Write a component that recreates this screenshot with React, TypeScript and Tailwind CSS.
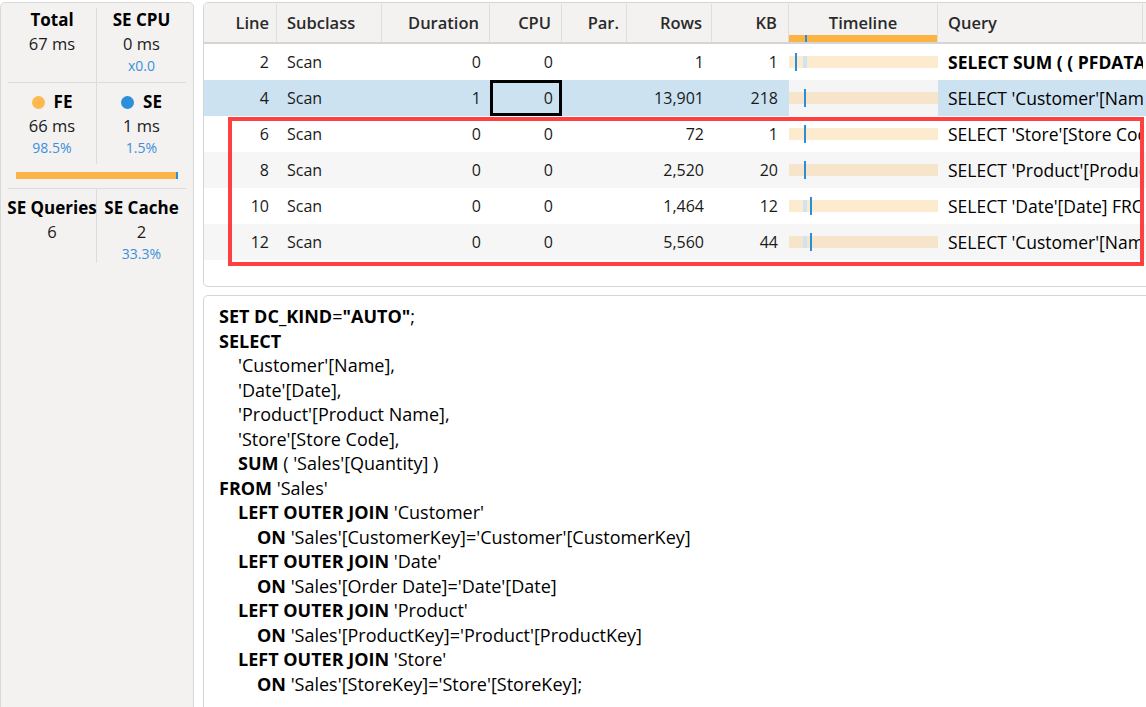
import React from "react";

type Row = {
  line: number;
  dur: string;
  cpu: string;
  rows: string;
  kb: string;
  query: string;
  bold?: boolean;
  selected?: boolean;
  tick: number;
  light?: number;
};

const rows: Row[] = [
  { line: 2, dur: "0", cpu: "0", rows: "1", kb: "1", query: "SELECT SUM ( ( PFDATA ( 'Sales'[Quantity] ) ) )", bold: true, tick: 6, light: 14 },
  { line: 4, dur: "1", cpu: "0", rows: "13,901", kb: "218", query: "SELECT 'Customer'[Name], 'Date'[Date]", selected: true, tick: 15 },
  { line: 6, dur: "0", cpu: "0", rows: "72", kb: "1", query: "SELECT 'Store'[Store Code] FROM 'Store';", tick: 15 },
  { line: 8, dur: "0", cpu: "0", rows: "2,520", kb: "20", query: "SELECT 'Product'[Product Name] FROM 'Product';", tick: 15 },
  { line: 10, dur: "0", cpu: "0", rows: "1,464", kb: "12", query: "SELECT 'Date'[Date] FROM 'Date';", tick: 21, light: 14 },
  { line: 12, dur: "0", cpu: "0", rows: "5,560", kb: "44", query: "SELECT 'Customer'[Name] FROM 'Customer';", tick: 21, light: 14 },
];

type Seg = [string, boolean?];
const code: { indent: number; segs: Seg[] }[] = [
  { indent: 0, segs: [["SET DC_KIND", true], ["="], ['"AUTO"', true], [";"]] },
  { indent: 0, segs: [["SELECT", true]] },
  { indent: 1, segs: [["'Customer'[Name],"]] },
  { indent: 1, segs: [["'Date'[Date],"]] },
  { indent: 1, segs: [["'Product'[Product Name],"]] },
  { indent: 1, segs: [["'Store'[Store Code],"]] },
  { indent: 1, segs: [["SUM", true], [" ( 'Sales'[Quantity] )"]] },
  { indent: 0, segs: [["FROM", true], [" 'Sales'"]] },
  { indent: 1, segs: [["LEFT OUTER JOIN", true], [" 'Customer'"]] },
  { indent: 2, segs: [["ON", true], [" 'Sales'[CustomerKey]='Customer'[CustomerKey]"]] },
  { indent: 1, segs: [["LEFT OUTER JOIN", true], [" 'Date'"]] },
  { indent: 2, segs: [["ON", true], [" 'Sales'[Order Date]='Date'[Date]"]] },
  { indent: 1, segs: [["LEFT OUTER JOIN", true], [" 'Product'"]] },
  { indent: 2, segs: [["ON", true], [" 'Sales'[ProductKey]='Product'[ProductKey]"]] },
  { indent: 1, segs: [["LEFT OUTER JOIN", true], [" 'Store'"]] },
  { indent: 2, segs: [["ON", true], [" 'Sales'[StoreKey]='Store'[StoreKey];"]] },
];

function Stat({ title, value, sub, dot }: { title: string; value: string; sub?: string; dot?: string }) {
  return (
    <div className="flex flex-col items-center">
      <div className="flex items-center gap-[9px] whitespace-nowrap text-[17px] leading-6 font-bold text-black">
        {dot && <span className={`h-[13px] w-[13px] rounded-full ${dot}`} />}
        {title}
      </div>
      <div className="text-[16.5px] leading-6 text-[#1a1a1a]">{value}</div>
      {sub && <div className="text-[14px] leading-5 text-[#3d8fdc]">{sub}</div>}
    </div>
  );
}

export default function App() {
  return (
    <div className="relative flex h-[707px] w-[1146px] items-start overflow-hidden bg-white pt-[2px] font-['Open_Sans',sans-serif]">
      {/* Summary panel */}
      <aside className="h-[720px] w-[194px] shrink-0 rounded-t-[5px] border border-[#d9d9d9] bg-[#f3f2f1] px-[7px] pt-[5px]">
        <div className="grid grid-cols-2 border-b border-[#dcdcdc]">
          <div className="h-[74px] border-r border-[#dcdcdc]">
            <Stat title="Total" value="67 ms" />
          </div>
          <div className="h-[74px]">
            <Stat title="SE CPU" value="0 ms" sub="x0.0" />
          </div>
        </div>
        <div className="border-b border-[#dcdcdc]">
          <div className="grid grid-cols-2">
            <div className="h-[81px] border-r border-[#dcdcdc] pt-[7px]">
              <Stat title="FE" value="66 ms" sub="98.5%" dot="bg-[#fdb94e]" />
            </div>
            <div className="h-[81px] pt-[7px]">
              <Stat title="SE" value="1 ms" sub="1.5%" dot="bg-[#2b8fd9]" />
            </div>
          </div>
          <div className="mx-[8px] mb-[9px] mt-[8px] flex h-[7px]">
            <div className="flex-1 bg-[#fbb447]" />
            <div className="w-[2px] bg-[#2a8edb]" />
          </div>
        </div>
        <div className="grid grid-cols-2">
          <div className="h-[74px] border-r border-[#dcdcdc] pt-[7px]">
            <Stat title="SE Queries" value="6" />
          </div>
          <div className="h-[74px] pt-[7px]">
            <Stat title="SE Cache" value="2" sub="33.3%" />
          </div>
        </div>
      </aside>

      <div className="ml-[9px] flex flex-col gap-[8px]">
        {/* Query list */}
        <div className="h-[285px] w-[980px] overflow-hidden rounded-[5px] border border-[#d5d5d5] bg-white text-[16px] text-[#1a1a1a]">
          <div className="flex h-[41px] border-b-2 border-[#d5d5d5] bg-[#f3f2f1] pt-[1px] text-[16.5px] font-semibold text-[#2a2a2a]">
            <div className="flex w-[73px] items-center justify-end border-r border-[#dedede] pr-[7px]">Line</div>
            <div className="flex w-[105px] items-center border-r border-[#dedede] pl-[10px]">Subclass</div>
            <div className="flex w-[108px] items-center justify-end border-r border-[#dedede] pr-[10px]">Duration</div>
            <div className="flex w-[72px] items-center justify-end border-r border-[#dedede] pr-[10px]">CPU</div>
            <div className="flex w-[65px] items-center justify-end border-r border-[#dedede] pr-[7px]">Par.</div>
            <div className="flex w-[85px] items-center justify-end border-r border-[#dedede] pr-[9px]">Rows</div>
            <div className="flex w-[77px] items-center justify-end border-r border-[#dedede] pr-[11px]">KB</div>
            <div className="relative flex w-[149px] items-center justify-center border-r border-[#dedede]">
              Timeline
              <div className="absolute bottom-0 left-0 h-[7px] w-full bg-[#fbb443]">
                <div className="absolute left-[16px] top-0 h-full w-[2px] bg-[#2a8edb]" />
              </div>
            </div>
            <div className="flex w-[205px] items-center border-r border-[#dedede] pl-[10px]">Query</div>
            <div className="flex-1" />
          </div>

          {rows.map((r, i) => {
            const bg = r.selected ? "bg-[#cde2f1]" : i % 2 === 1 ? "bg-[#f6f6f6]" : "bg-white";
            const barBg = i % 2 === 1 ? "bg-[#f7e5cb]" : "bg-[#fdebd0]";
            return (
              <div key={r.line} className={`flex h-[36px] items-center ${bg}`}>
                <div className="w-[73px] pr-[8px] text-right">{r.line}</div>
                <div className="w-[105px] pl-[10px]">Scan</div>
                <div className="w-[108px] pr-[9px] text-right">{r.dur}</div>
                <div
                  className={`flex h-full w-[72px] items-center justify-end ${
                    r.selected ? "border-[3px] border-black pr-[6px]" : "pr-[9px]"
                  }`}
                >
                  {r.cpu}
                </div>
                <div className="w-[65px]" />
                <div className="w-[85px] pr-[8px] text-right">{r.rows}</div>
                <div className="w-[77px] pr-[11px] text-right">{r.kb}</div>
                <div className={`flex h-full w-[149px] items-center ${r.selected ? "bg-[#f5f5f5]" : ""}`}>
                  <div className={`relative h-[12px] w-full ${barBg}`}>
                    {r.light !== undefined && (
                      <div className="absolute top-0 h-full w-[4px] bg-[#cfe3f3]" style={{ left: r.light }} />
                    )}
                    <div className="absolute top-[-3px] h-[18px] w-[2px] bg-[#2a8edb]" style={{ left: r.tick }} />
                  </div>
                </div>
                <div
                  className={`w-[205px] overflow-hidden whitespace-nowrap pl-[10px] text-[17.5px] text-black ${
                    r.bold ? "font-bold" : ""
                  }`}
                >
                  {r.query}
                </div>
                <div className="flex-1" />
              </div>
            );
          })}
        </div>

        {/* Query text */}
        <div className="h-[430px] w-[980px] rounded-[5px] border border-[#d5d5d5] bg-white pl-[15px] pt-[8px] text-[18px] leading-[24.5px] text-black">
          {code.map((l, i) => (
            <div
              key={i}
              className={`whitespace-pre ${l.indent === 1 ? "pl-[19px]" : l.indent === 2 ? "pl-[38px]" : ""}`}
            >
              {l.segs.map(([t, b], j) => (
                <span key={j} className={b ? "font-bold" : ""}>
                  {t}
                </span>
              ))}
            </div>
          ))}
        </div>
      </div>

      {/* highlight annotation */}
      <div className="pointer-events-none absolute left-[228px] top-[117px] h-[149px] w-[916px] border-4 border-[#ff4040]" />
    </div>
  );
}
